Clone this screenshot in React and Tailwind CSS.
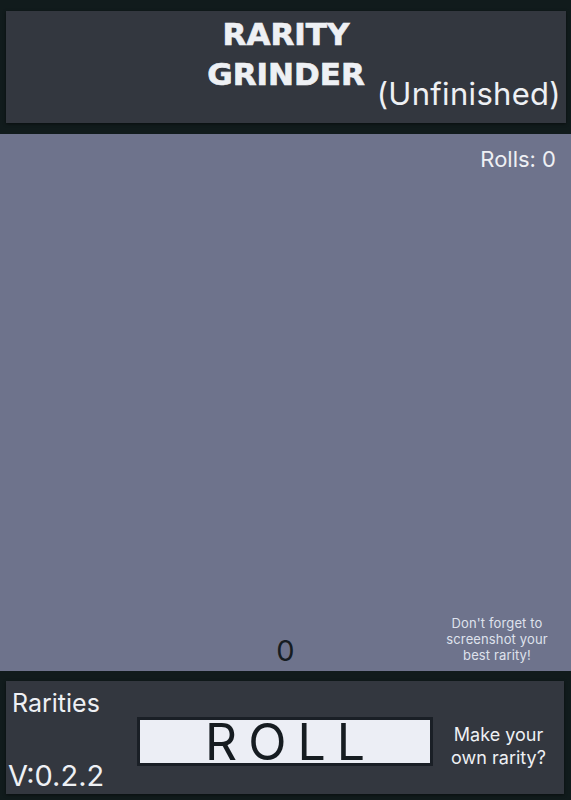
export default function App() {
  const body = { fontFamily: 'Inter, "Open Sans", sans-serif' };
  return (
    <div className="w-[571px] h-[800px] bg-[#111b1c] flex flex-col overflow-hidden" style={body}>
      {/* header */}
      <div className="pt-[11px] pb-[11px] pl-[6px] pr-[5px]">
        <div className="h-[112px] bg-[#33373f] grid grid-cols-[1fr_auto_1fr] shadow-[0_1px_3px_rgba(0,0,0,0.5)]">
          <div></div>
          <div
            className="flex flex-col items-center pt-[3px] text-[31px] leading-[40px] font-bold text-[#eef0f4] [-webkit-text-stroke:0.7px_#eef0f4]"
            style={{ fontFamily: '"DejaVu Sans", sans-serif' }}
          >
            <span>RARITY</span>
            <span>GRINDER</span>
          </div>
          <div className="flex items-end justify-end pr-[5px] pb-[10px]">
            <span className="text-[31px] leading-[38px] text-[#eef0f4] tracking-[0.01em]">(Unfinished)</span>
          </div>
        </div>
      </div>

      {/* main */}
      <div className="h-[537px] bg-[#6e738c] flex flex-col">
        <div className="flex justify-end pr-[15px] pt-[12px]">
          <span className="text-[22px] leading-[26px] text-[#eef0f4]">Rolls: 0</span>
        </div>
        <div className="flex-1"></div>
        <div className="grid grid-cols-[1fr_auto_1fr] items-end pb-[8px]">
          <div></div>
          <div className="text-[29px] leading-[32px] text-[#161c21] -mb-[4px]">0</div>
          <div className="flex justify-end pr-[12px]">
            <div className="text-[13px] leading-[16px] text-[#dfe2ec] text-center w-[124px] tracking-[0.01em]">
              Don't forget to<br />screenshot your<br />best rarity!
            </div>
          </div>
        </div>
      </div>

      {/* bottom */}
      <div className="pt-[10px] pb-[6px] pl-[6px] pr-[7px]">
        <div className="h-[113px] bg-[#33373f] grid grid-cols-[131px_296px_1fr] shadow-[0_1px_3px_rgba(0,0,0,0.5)]">
          <div className="flex flex-col justify-between pl-[6px] pt-[8px] pb-[1px] text-[#eef0f4]">
            <span className="text-[25px] leading-[28px]">Rarities</span>
            <span className="text-[29px] leading-[34px] -ml-[4px]">V:0.2.2</span>
          </div>
          <div className="pt-[36px]">
            <button className="w-[296px] h-[49px] bg-[#eceef5] border-[3px] border-[#1a1f26] flex items-center justify-center">
              <span className="text-[50px] leading-[50px] tracking-[0.22em] text-[#161c21] pl-[0.22em]">ROLL</span>
            </button>
          </div>
          <div className="flex items-center justify-center pt-[16px]">
            <div className="text-[18px] leading-[23px] text-[#eef0f4] text-center">
              Make your<br />own rarity?
            </div>
          </div>
        </div>
      </div>
    </div>
  );
}
